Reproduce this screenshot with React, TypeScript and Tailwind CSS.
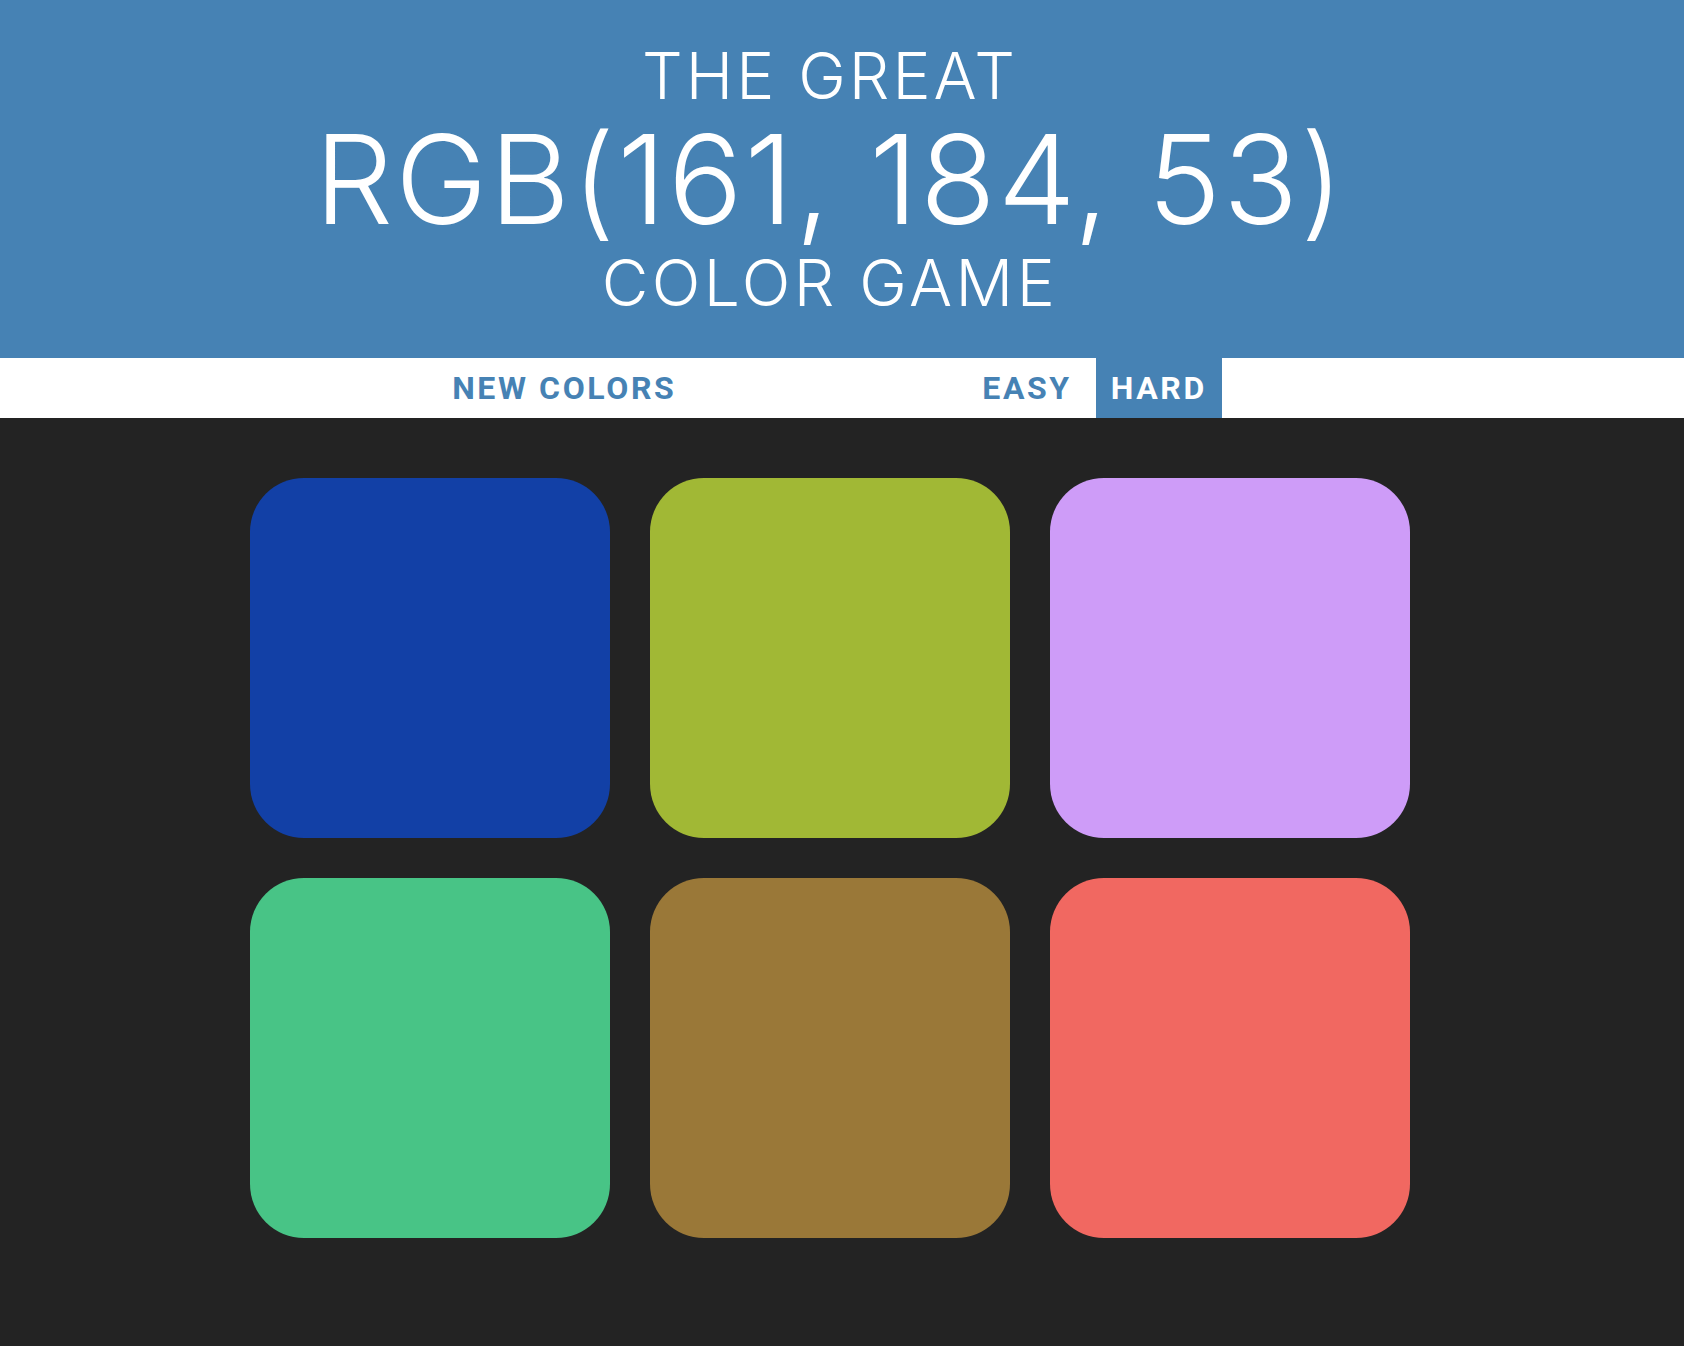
const squares = [
  "bg-[#1240a6]",
  "bg-[#a1b835]",
  "bg-[#ce9cf8]",
  "bg-[#48c486]",
  "bg-[#9a7838]",
  "bg-[#f16861]",
];

export default function App() {
  return (
    <div className="min-h-screen bg-[#232323]">
      <h1 className="bg-[#4682b4] pt-[41px] pb-10 pr-6 text-center font-light uppercase leading-[1.1] text-white font-['Inter',sans-serif]">
        <span className="block text-[64px] tracking-[3px]">The Great</span>
        <span className="block text-[124px] tracking-[2px]">RGB(161, 184, 53)</span>
        <span className="block text-[64px] tracking-[3.5px]">Color Game</span>
      </h1>

      <div className="flex h-[60px] justify-center bg-white pr-6 font-['Roboto',sans-serif] text-[32px] font-bold uppercase tracking-[2.6px]">
        <button className="h-full px-[14px] uppercase text-[#4682b4]">New Colors</button>
        <span className="inline-block w-[278px]" />
        <button className="h-full px-[14px] uppercase text-[#4682b4]">Easy</button>
        <button className="ml-[10px] h-full bg-[#4682b4] px-[15px] uppercase text-white">Hard</button>
      </div>

      <main className="pr-6">
        <div className="mx-auto mt-10 grid w-[1200px] grid-cols-3 gap-10 p-5">
          {squares.map((c, i) => (
            <div key={i} className={`aspect-square w-[360px] rounded-[15%] ${c}`} />
          ))}
        </div>
      </main>
    </div>
  );
}
